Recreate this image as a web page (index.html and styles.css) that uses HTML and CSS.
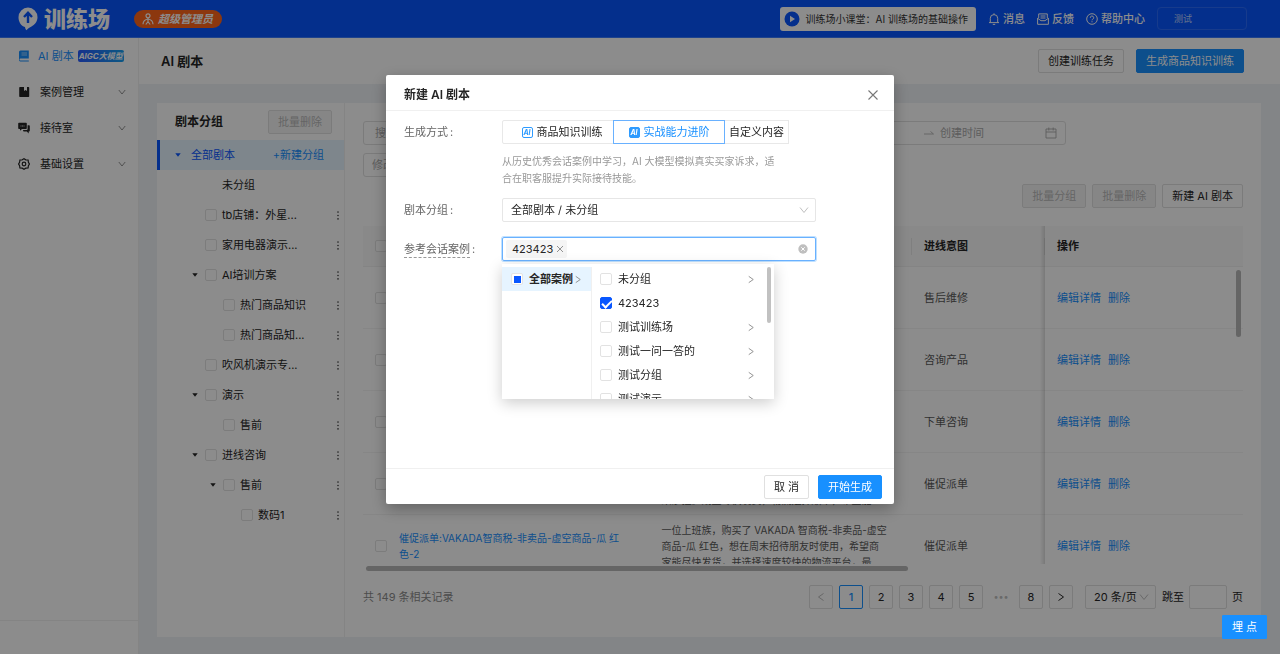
FILE: index.html
```html
<!DOCTYPE html>
<html lang="zh-CN">
<head>
<meta charset="utf-8">
<title>AI 剧本 - 训练场</title>
<link rel="stylesheet" href="styles.css">
</head>
<body>
<svg class="sprite" aria-hidden="true">
  <symbol id="chev-down" viewBox="0 0 10 10"><path d="M1 2.5 5 7.5 9 2.5" fill="none" stroke="currentColor"/></symbol>
  <symbol id="chev-right" viewBox="0 0 10 10"><path d="M2.500 1.500 7.500 5 2.500 8.500" fill="none" stroke="currentColor"/></symbol>
  <symbol id="more" viewBox="0 0 4 10"><g fill="currentColor"><circle cx="2" cy="1.2" r=".9"/><circle cx="2" cy="5" r=".9"/><circle cx="2" cy="8.8" r=".9"/></g></symbol>
  <symbol id="caret" viewBox="0 0 6 4"><path d="M.3.3h5.4L3 3.700z" fill="currentColor"/></symbol>
</svg>
<div class="app">
  <header class="topbar">
    <svg class="logo-mark" viewBox="0 0 20 24"><path d="M10 .5a9.6 9.6 0 0 1 9.5 9.7c0 4.500-3 7.600-6 9.300-1.800 1-3.500 2-5 3.800-1-.7-1.300-1.800-1.500-3.200C3 18.800.5 14.800.5 10.200A9.600 9.600 0 0 1 10 .5z" fill="#fff"/><path d="M10 16V6.500M6 10l4-4.200 4 4.200" fill="none" stroke="#0957ff" stroke-width="2.400"/></svg>
    <span class="logo-text">训练场</span>
    <span class="role"><svg class="role-icon" viewBox="0 0 12 12"><g fill="none" stroke="#fff" stroke-width="1.200"><circle cx="6" cy="2.800" r="2"/><path d="M6 5v4M1 11.200c.2-3 1.800-4.700 5-5.200 3.200.5 4.800 2.200 5 5.200M3.800 11.500 6 8.700l2.200 2.800"/></g></svg>超级管理员</span>
    <div class="top-right">
      <button class="course"><svg class="play" viewBox="0 0 16 16"><circle cx="8" cy="8" r="7.500" fill="#0957ff"/><path d="M6 4.800v6.400L11 8z" fill="#fff"/></svg>训练场小课堂：AI 训练场的基础操作</button>
      <a class="top-link" href="#"><svg class="i12" viewBox="0 0 12 12"><path d="M2.300 9.500V5.300a3.700 3.700 0 0 1 7.400 0v4.200M1 9.600h10M4.800 11.400h2.400M6 .3v1.400" fill="none" stroke="#fff"/></svg>消息</a>
      <a class="top-link" href="#"><svg class="i12" viewBox="0 0 12 12"><path d="M1.700 5V.9h8.600V5M.6 5v6.300h10.800V5M.8 5.400 4 7.700h4l3.200-2.300M3.500 3h5M3.500 5h5" fill="none" stroke="#fff"/></svg>反馈</a>
      <a class="top-link" href="#"><svg class="i12" viewBox="0 0 12 12"><circle cx="6" cy="6" r="5.300" fill="none" stroke="#fff"/><path d="M4.300 4.800a1.700 1.700 0 1 1 2.300 1.500q-.6.300-.6 1M6 8.200v1.100" fill="none" stroke="#fff"/></svg>帮助中心</a>
      <button class="account">测试</button>
    </div>
  </header>
  <div class="shell">
    <nav class="side">
      <a class="side-item active" href="#"><svg class="side-icon" viewBox="0 0 12 12"><path d="M2.500.5h8.300v8H2.500a1 1 0 0 0 0 2h8.300v1H2.300A1.500 1.500 0 0 1 1 10V2A1.500 1.500 0 0 1 2.500.5z" fill="currentColor"/><path d="M3.500 3h5.500M3.500 5h5.500" stroke="#fff" stroke-width=".6"/></svg>AI 剧本<span class="aigc">AIGC大模型</span></a>
      <a class="side-item" href="#"><svg class="side-icon" viewBox="0 0 12 12"><path d="M2 1h4v4l1.500-1L9 5V1h1.500q.7 0 .7.700v8.600q0 .7-.7.700H2q-.8 0-.8-.7V1.700Q1.200 1 2 1z" fill="currentColor"/></svg><span class="side-label">案例管理</span><svg class="side-chev"><use href="#chev-down"/></svg></a>
      <a class="side-item" href="#"><svg class="side-icon" viewBox="0 0 12 12"><path d="M1 .8h7q.8 0 .8.800v4.600q0 .8-.8.800H4L2 8.800V7H1Q.2 7 .2 6.200V1.600Q.2.800 1 .8z" fill="currentColor"/><path d="M9.600 3.200h1.400q.8 0 .8.800v4.800q0 .8-.8.800h-.3v1.800L8.800 9.600H6Q5 9.600 5 8h3.600q1 0 1-1z" fill="currentColor"/><path d="M2.500 4h4" stroke="#fff" stroke-dasharray="1 .5" stroke-width=".8"/></svg><span class="side-label">接待室</span><svg class="side-chev"><use href="#chev-down"/></svg></a>
      <a class="side-item" href="#"><svg class="side-icon" viewBox="0 0 12 12"><g fill="none" stroke="currentColor" stroke-width="1.200"><path d="M4.200 1.800 6 .7l1.800 1.100 2.300.2.300 2.300L11.400 6l-1 1.700-.3 2.300-2.300.2L6 11.300l-1.800-1.100-2.300-.2-.3-2.300L.6 6l1-1.700L1.900 2z"/><circle cx="6" cy="6" r="1.800"/></g></svg><span class="side-label">基础设置</span><svg class="side-chev"><use href="#chev-down"/></svg></a>
      <div class="side-foot"></div>
    </nav>
    <main class="main">
      <div class="page-head">
        <h1 class="page-title">AI 剧本</h1>
        <button class="btn">创建训练任务</button>
        <button class="btn primary">生成商品知识训练</button>
      </div>
      <div class="card">
        <aside class="groups">
          <div class="groups-head"><h2 class="groups-title">剧本分组</h2><button class="btn" disabled>批量删除</button></div>
          <div class="tree-root"><svg class="caret"><use href="#caret"/></svg><span class="root-name">全部剧本</span><button class="link-btn">+新建分组</button></div>
          <div class="node l1"><span class="caret"></span><span class="plain">未分组</span></div>
          <div class="node l1"><span class="caret"></span><label><input type="checkbox">tb店铺：外星...</label><svg class="more"><use href="#more"/></svg></div>
          <div class="node l1"><span class="caret"></span><label><input type="checkbox">家用电器演示...</label><svg class="more"><use href="#more"/></svg></div>
          <div class="node l1"><svg class="caret"><use href="#caret"/></svg><label><input type="checkbox">AI培训方案</label><svg class="more"><use href="#more"/></svg></div>
          <div class="node l2"><span class="caret"></span><label><input type="checkbox">热门商品知识</label><svg class="more"><use href="#more"/></svg></div>
          <div class="node l2"><span class="caret"></span><label><input type="checkbox">热门商品知...</label><svg class="more"><use href="#more"/></svg></div>
          <div class="node l1"><span class="caret"></span><label><input type="checkbox">吹风机演示专...</label><svg class="more"><use href="#more"/></svg></div>
          <div class="node l1"><svg class="caret"><use href="#caret"/></svg><label><input type="checkbox">演示</label><svg class="more"><use href="#more"/></svg></div>
          <div class="node l2"><span class="caret"></span><label><input type="checkbox">售前</label><svg class="more"><use href="#more"/></svg></div>
          <div class="node l1"><svg class="caret"><use href="#caret"/></svg><label><input type="checkbox">进线咨询</label><svg class="more"><use href="#more"/></svg></div>
          <div class="node l2"><svg class="caret"><use href="#caret"/></svg><label><input type="checkbox">售前</label><svg class="more"><use href="#more"/></svg></div>
          <div class="node l3"><span class="caret"></span><label><input type="checkbox">数码1</label><svg class="more"><use href="#more"/></svg></div>
        </aside>
        <section class="content">
          <div class="filters">
            <input class="field" type="text" placeholder="搜索" aria-label="搜索">
            <input class="field" type="text" aria-label="意图">
            <div class="range"><input type="text" aria-label="开始时间"><svg class="arrow" viewBox="0 0 10 6"><path d="M0 4h9.500L6.500 1.500" fill="none" stroke="currentColor" stroke-width=".8"/></svg><input type="text" placeholder="创建时间" aria-label="创建时间"><svg class="cal" viewBox="0 0 12 12"><path d="M1 2h10v9H1zM1 5h10M3.800.5v3M8.200.5v3" fill="none" stroke="currentColor" stroke-width=".9"/></svg></div>
          </div>
          <div class="filters second"><input class="field" type="text" placeholder="修改时间" aria-label="修改时间"></div>
          <div class="actions"><button class="btn" disabled>批量分组</button><button class="btn" disabled>批量删除</button><button class="btn">新建 AI 剧本</button></div>
          <div class="table-wrap">
            <table class="table">
              <colgroup><col class="c-check"><col><col><col class="c-intent"><col class="c-ops"></colgroup>
              <thead><tr><th><input type="checkbox" aria-label="全选"></th><th></th><th class="sep"></th><th class="sep">进线意图</th><th class="ops">操作</th></tr></thead>
              <tbody>
                <tr><td><input type="checkbox" aria-label="选择"></td><td></td><td></td><td>售后维修</td><td class="ops"><a href="#">编辑详情</a><a href="#">删除</a></td></tr>
                <tr><td><input type="checkbox" aria-label="选择"></td><td></td><td></td><td>咨询产品</td><td class="ops"><a href="#">编辑详情</a><a href="#">删除</a></td></tr>
                <tr><td><input type="checkbox" aria-label="选择"></td><td></td><td></td><td>下单咨询</td><td class="ops"><a href="#">编辑详情</a><a href="#">删除</a></td></tr>
                <tr><td><input type="checkbox" aria-label="选择"></td><td></td><td class="desc"><div class="clamp"><br><br>来沙拉。期望尽快发货，物流选择顺丰，希望能...</div></td><td>催促派单</td><td class="ops"><a href="#">编辑详情</a><a href="#">删除</a></td></tr>
                <tr><td><input type="checkbox" aria-label="选择"></td><td class="name"><a href="#">催促派单:VAKADA智商税-非卖品-虚空商品-瓜 红<br>色-2</a></td><td class="desc"><div class="clamp">一位上班族，购买了 VAKADA 智商税-非卖品-虚空<br>商品-瓜 红色，想在周末招待朋友时使用，希望商<br>家能尽快发货，并选择速度较快的物流平台，最</div></td><td>催促派单</td><td class="ops"><a href="#">编辑详情</a><a href="#">删除</a></td></tr>
              </tbody>
            </table>
            <span class="v-thumb"></span>
          </div>
          <div class="h-track"><div class="h-thumb"></div></div>
          <div class="pager">
            <span class="total">共 149 条相关记录</span>
            <button class="pg off" aria-label="上一页"><svg class="i10 flip"><use href="#chev-right"/></svg></button>
            <button class="pg on">1</button><button class="pg">2</button><button class="pg">3</button><button class="pg">4</button><button class="pg">5</button>
            <span class="dots">•••</span>
            <button class="pg">8</button>
            <button class="pg" aria-label="下一页"><svg class="i10"><use href="#chev-right"/></svg></button>
            <div class="size"><select aria-label="每页条数"><option>20 条/页</option></select><svg class="i10 drop"><use href="#chev-down"/></svg></div>
            <label class="jump">跳至<input type="text">页</label>
          </div>
        </section>
      </div>
    </main>
  </div>
</div>
<div class="mask">
  <div class="modal" role="dialog" aria-labelledby="dlg-title">
    <div class="modal-head"><h2 id="dlg-title" class="modal-title">新建 AI 剧本</h2><button class="close" aria-label="关闭"><svg class="i12" viewBox="0 0 12 12"><path d="m1.500 1.500 9 9m0-9-9 9" stroke="currentColor" stroke-width="1.100"/></svg></button></div>
    <div class="modal-body">
      <div class="row">
        <span class="label">生成方式<span class="colon">:</span></span>
        <div class="control">
          <div class="modes">
            <button class="mode wide"><span class="ai line">AI</span>商品知识训练</button><button class="mode wide chosen"><span class="ai">AI</span>实战能力进阶</button><button class="mode">自定义内容</button>
          </div>
          <p class="hint">从历史优秀会话案例中学习，AI 大模型模拟真实买家诉求，适<br>合在职客服提升实际接待技能。</p>
        </div>
      </div>
      <div class="row">
        <label class="label" for="group">剧本分组<span class="colon">:</span></label>
        <div class="control"><div class="select-box"><select id="group"><option>全部剧本 / 未分组</option></select><svg class="i10 drop"><use href="#chev-down"/></svg></div></div>
      </div>
      <div class="row">
        <label class="label" for="cases"><span class="dotted">参考会话案例</span><span class="colon">:</span></label>
        <div class="control">
          <div class="multi">
            <span class="tag">423423<svg class="x" viewBox="0 0 8 8"><path d="m1 1 6 6m0-6-6 6" stroke="currentColor" stroke-width=".8"/></svg></span>
            <input id="cases" type="text">
            <svg class="i10 clear" viewBox="0 0 10 10"><circle cx="5" cy="5" r="4.700" fill="#bfbfbf"/><path d="m3.300 3.300 3.400 3.400m0-3.400L3.300 6.700" stroke="#fff"/></svg>
            <div class="cascade">
              <div class="menu first"><div class="opt current"><label><input class="part" type="checkbox">全部案例</label><svg class="go"><use href="#chev-right"/></svg></div></div>
              <div class="menu">
                <div class="opt"><label><input type="checkbox">未分组</label><svg class="go"><use href="#chev-right"/></svg></div>
                <div class="opt"><label><input type="checkbox" checked>423423</label></div>
                <div class="opt"><label><input type="checkbox">测试训练场</label><svg class="go"><use href="#chev-right"/></svg></div>
                <div class="opt"><label><input type="checkbox">测试一问一答的</label><svg class="go"><use href="#chev-right"/></svg></div>
                <div class="opt"><label><input type="checkbox">测试分组</label><svg class="go"><use href="#chev-right"/></svg></div>
                <div class="opt"><label><input type="checkbox">测试演示</label><svg class="go"><use href="#chev-right"/></svg></div>
                <span class="menu-thumb"></span>
              </div>
            </div>
          </div>
        </div>
      </div>
    </div>
    <div class="modal-foot"><button class="btn">取 消</button><button class="btn primary">开始生成</button></div>
  </div>
</div>
<button class="btn primary track">埋 点</button>
</body>
</html>
```

FILE: styles.css
```css
* { box-sizing: border-box; }
body { margin: 0; overflow: hidden; color: #262626; font: 11px/16px Inter, "Noto Sans CJK SC", sans-serif; }
button, input, select { font: inherit; color: inherit; margin: 0; }
button { cursor: pointer; }
a { text-decoration: none; color: inherit; }
h1, h2, p { margin: 0; }
svg { flex: none; display: block; }
.sprite { position: absolute; width: 0; height: 0; }
.i12 { width: 12px; height: 12px; }
.i10 { width: 10px; height: 10px; }
.flip { transform: scaleX(-1); }

input[type="checkbox"] { appearance: none; flex: none; display: block; width: 12px; height: 12px; border: 1px solid #e2e2e2; border-radius: 2px; background: #fff; }
input[type="checkbox"]:checked { border-color: #0957ff; background: #0957ff; position: relative; }
input[type="checkbox"]:checked::after { content: ""; position: absolute; left: 3px; top: 0; width: 4px; height: 8px; border: solid #fff; border-width: 0 2px 2px 0; transform: rotate(45deg); }
input[type="checkbox"].part { border-color: #e4e4e4; background: linear-gradient(#0957ff, #0957ff) center / 7px 7px no-repeat #fff; }

.btn { height: 24px; padding: 0 9px; border: 1px solid #e0e0e0; border-radius: 2px; background: #fff; white-space: nowrap; line-height: 16px; }
.btn:disabled { background: #f5f5f5; color: #b8b8b8; }
.btn.primary { border-color: #1890ff; background: #1890ff; color: #fff; }

.app { height: 100vh; display: flex; flex-direction: column; background: #eff2f6; }
.topbar { height: 38px; flex: none; display: flex; align-items: center; padding: 0 33px 0 18px; background: #0957ff; color: #fff; border-bottom: 1px solid #3a7bff; }
.logo-mark { width: 20px; height: 24px; }
.logo-text { margin-left: 6px; font-size: 22px; line-height: 30px; font-weight: 900; }
.role { display: flex; align-items: center; gap: 4px; height: 18px; margin-left: 24px; padding: 0 9px 0 8px; border-radius: 9px; background: #ff651a; font-weight: 700; font-style: italic; }
.role-icon { width: 12px; height: 12px; }
.top-right { margin-left: auto; display: flex; align-items: center; gap: 12px; }
.course { display: flex; align-items: center; gap: 6px; height: 24px; padding: 0 8px 0 4px; border: 0; border-radius: 3px; background: #fff; color: #333; font-size: 10px; }
.play { width: 16px; height: 16px; }
.top-link { display: flex; align-items: center; gap: 3px; font-weight: 500; }
.account { width: 90px; height: 23px; padding: 0 16px; border: 1px solid #2b6cff; border-radius: 4px; background: transparent; color: #bed3ff; font-size: 9px; text-align: left; }

.shell { flex: 1; min-height: 0; display: flex; }
.side { width: 139px; flex: none; display: flex; flex-direction: column; background: #fff; border-right: 1px solid #f0f0f0; }
.side-item { display: flex; align-items: center; height: 36px; padding: 0 12px 0 18px; white-space: nowrap; }
.side-item.active { color: #1890ff; }
.side-icon { width: 12px; height: 12px; margin-right: 8px; }
.side-label { flex: 1; padding-left: 2px; }
.side-chev { width: 8px; height: 8px; color: #777; }
.aigc { margin-left: 4px; padding: 0 1px; border-radius: 2px; background: linear-gradient(90deg, #2a5cff, #18a0f0); color: #fff; font-size: 8px; line-height: 12px; font-weight: 700; font-style: italic; }
.side-foot { height: 34px; margin-top: auto; border-top: 1px solid #f0f0f0; }

.main { flex: 1; min-width: 0; display: flex; flex-direction: column; }
.page-head { display: flex; align-items: center; gap: 12px; height: 46px; flex: none; padding: 0 36px 0 22px; background: #fff; }
.page-title { flex: 1; font-size: 13px; font-weight: 600; }
.card { flex: 1; min-height: 0; display: flex; margin: 19px 19px 17px 18px; background: #fff; }

.groups { width: 188px; flex: none; border-right: 1px solid #f0f0f0; }
.groups-head { display: flex; align-items: center; justify-content: space-between; height: 37px; padding: 0 12px 0 18px; }
.groups-title { font-size: 12px; font-weight: 600; }
.tree-root { display: flex; align-items: center; height: 30px; padding: 0 20px 0 14px; border-left: 3px solid #0957ff; background: #e6f4ff; color: #0957ff; }
.caret { width: 8px; height: 4px; flex: none; }
.root-name { flex: 1; margin-left: 9px; }
.link-btn { padding: 0; border: 0; background: none; color: #1890ff; }
.node { display: flex; align-items: center; height: 30px; padding-right: 4px; }
.node label { flex: 1; display: flex; align-items: center; gap: 5px; margin-left: 6px; white-space: nowrap; }
.plain { margin-left: 23px; }
.l1 { padding-left: 34px; }
.l2 { padding-left: 52px; }
.l3 { padding-left: 70px; }
.more { width: 4px; height: 9px; color: #444; }

.content { flex: 1; min-width: 0; display: flex; flex-direction: column; padding: 18px 18px 28px; }
.filters { display: flex; gap: 10px; max-width: 703px; margin-bottom: 8px; }
.filters.second { margin-bottom: 7px; }
.field { flex: 1; min-width: 0; height: 24px; padding: 0 11px; border: 1px solid #e0e0e0; border-radius: 3px; }
.second .field { max-width: 256px; padding: 0 8px; }
::placeholder { color: #aaa; opacity: 1; }
.range { width: 256px; display: flex; align-items: center; gap: 6px; height: 24px; padding: 0 8px; border: 1px solid #e0e0e0; border-radius: 3px; color: #aaa; }
.range input { flex: 1; min-width: 0; padding: 0; border: 0; outline: 0; }
.arrow { width: 10px; height: 6px; }
.cal { width: 12px; height: 12px; }
.actions { display: flex; justify-content: flex-end; gap: 6px; margin-bottom: 18px; }

.table-wrap { position: relative; flex: 1; min-height: 0; overflow: hidden; }
.table { width: 100%; border-collapse: separate; border-spacing: 0; table-layout: fixed; }
.c-check { width: 24px; }
.c-intent { width: 133px; }
.c-ops { width: 198px; }
.table th { height: 41px; padding: 0 12px; background: #fafafa; border-bottom: 1px solid #f0f0f0; text-align: left; font-weight: 600; }
.table th.sep { background: linear-gradient(#e8e8e8, #e8e8e8) right center / 1px 17px no-repeat #fafafa; }
.table td { height: 62px; padding: 0 12px; border-bottom: 1px solid #f4f4f4; color: #595959; }
.table td:first-child, .table th:first-child { padding-right: 0; }
.table td a { color: #1890ff; }
.table .ops { position: relative; }
.table .ops::before { content: ""; position: absolute; left: -5px; top: 0; bottom: -1px; width: 5px; background: linear-gradient(90deg, transparent, rgba(0, 0, 0, .13)); }
.ops a + a { margin-left: 7px; }
.name { white-space: nowrap; }
.clamp { white-space: nowrap; font-size: 10px; }
.table .name { font-size: 10px; }
.v-thumb { position: absolute; right: 2px; top: 44px; width: 5px; height: 67px; border-radius: 3px; background: #b8b8b8; }
.h-track { padding: 2px 3px 0; height: 7px; }
.h-thumb { width: 62%; height: 5px; border-radius: 3px; background: #b8b8b8; }

.pager { display: flex; align-items: center; gap: 6px; margin-top: 14px; }
.total { flex: 1; color: #8c8c8c; }
.pg { width: 24px; height: 24px; display: flex; align-items: center; justify-content: center; padding: 0; border: 1px solid #e0e0e0; border-radius: 2px; background: #fff; }
.pg.on { border-color: #1890ff; color: #1890ff; font-weight: 500; }
.pg.off { color: #bbb; }
.dots { width: 24px; text-align: center; color: #bfbfbf; font-size: 9px; }
.size { position: relative; width: 71px; margin-left: 6px; }
.size select { appearance: none; width: 100%; height: 24px; padding: 0 8px; border: 1px solid #e0e0e0; border-radius: 2px; background: #fff; }
.drop { position: absolute; right: 7px; top: 7px; color: #bfbfbf; pointer-events: none; }
.jump { display: flex; align-items: center; gap: 5px; }
.jump input { width: 38px; height: 24px; border: 1px solid #e0e0e0; border-radius: 2px; }

.mask { position: fixed; inset: 0; display: flex; align-items: flex-start; justify-content: center; padding-top: 75px; background: rgba(0, 0, 0, .45); }
.modal { width: 508px; border-radius: 2px; background: #fff; box-shadow: 0 5px 16px rgba(0, 0, 0, .3); }
.modal-head { display: flex; align-items: center; justify-content: space-between; height: 36px; padding: 4px 15px 0 18px; border-bottom: 1px solid #f0f0f0; }
.modal-title { font-size: 12px; font-weight: 600; }
.close { padding: 0; border: 0; background: none; color: #777; }
.modal-body { display: flex; flex-direction: column; min-height: 357px; padding: 9px 18px 0; }
.row { display: flex; margin-bottom: 15px; }
.row:first-child { margin-bottom: 11px; }
.label { width: 98px; flex: none; line-height: 24px; color: #666; white-space: nowrap; }
.colon { margin-left: 2px; }
.dotted { padding-bottom: 1px; border-bottom: 1px dashed #999; }
.control { width: 314px; }
.modes { display: flex; }
.mode { display: flex; align-items: center; justify-content: center; gap: 4px; height: 24px; padding: 0 4px; border: 1px solid #e8e8e8; background: #fff; white-space: nowrap; }
.mode.wide { width: 112px; }
.mode:first-child { padding-left: 12px; border-radius: 2px 0 0 2px; }
.mode + .mode { margin-left: -1px; }
.mode.chosen { position: relative; border-color: #69b1ff; color: #1890ff; }
.ai { width: 11px; height: 11px; border: 1px solid #2e9bff; border-radius: 2px; background: #2e9bff; color: #fff; font-size: 7px; line-height: 9px; font-weight: 700; font-style: italic; text-align: center; }
.ai.line { background: #fff; color: #2e9bff; }
.hint { padding-top: 9px; color: #999; line-height: 17px; white-space: nowrap; font-size: 10px; }
.select-box { position: relative; }
.select-box select { appearance: none; width: 100%; height: 24px; padding: 0 8px; border: 1px solid #e6e6e6; border-radius: 2px; background: #fff; }
.multi { position: relative; display: flex; align-items: center; height: 24px; padding: 0 7px 0 3px; border: 1px solid #69b1ff; border-radius: 2px; box-shadow: 0 0 0 1px #bfe0ff; }
.multi > input { flex: 1; min-width: 0; border: 0; padding: 0; outline: 0; background: none; }
.tag { display: flex; align-items: center; gap: 3px; height: 18px; padding: 0 3px 0 6px; border-radius: 2px; background: #f5f5f5; }
.x { width: 8px; height: 8px; color: #777; }
.cascade { position: absolute; left: -1px; top: 26px; z-index: 2; display: flex; width: 272px; height: 135px; padding-top: 3px; overflow: hidden; background: #fff; box-shadow: 0 4px 14px rgba(0, 0, 0, .2); }
.menu { position: relative; flex: 1; }
.menu.first { flex: none; width: 90px; border-right: 1px solid #f0f0f0; }
.opt { display: flex; align-items: center; height: 24px; padding: 0 18px 0 8px; }
.opt label { flex: 1; display: flex; align-items: center; gap: 6px; white-space: nowrap; }
.opt input[type="checkbox"]:checked { border-color: #0957ff; }
.current { padding: 0 8px 0 9px; background: #e6f4ff; font-weight: 600; }
.go { width: 10px; height: 9px; color: #888; }
.menu-thumb { position: absolute; right: 3px; top: 0; width: 4px; height: 56px; border-radius: 2px; background: #c1c1c1; }
.modal-foot { display: flex; justify-content: flex-end; gap: 9px; padding: 6px 12px 5px; border-top: 1px solid #f0f0f0; }
.track { position: fixed; right: 13px; bottom: 15px; border-radius: 1px; }
```
